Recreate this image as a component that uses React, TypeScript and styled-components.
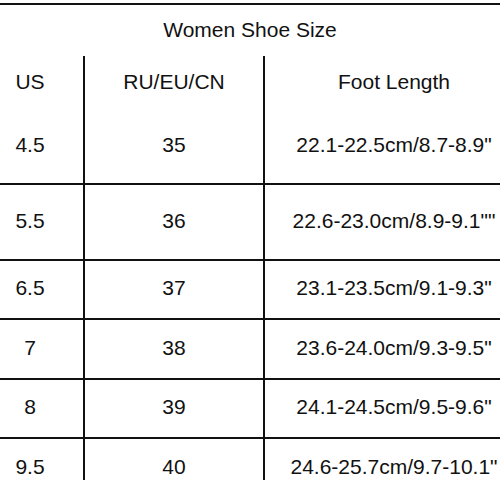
import styled, { createGlobalStyle } from 'styled-components';

const GlobalStyle = createGlobalStyle`
  html, body {
    margin: 0;
    padding: 0;
    background: #fff;
    overflow: hidden;
  }
  body {
    font-family: "Liberation Sans", Arial, sans-serif;
    color: #111;
  }
`;

// Chart wrapper: wider than the window, so first and last columns run off the edges
const Chart = styled.div`
  width: 546px;
  margin: 3px 0 0 -23px;
  border-top: 2px solid #111;
`;

const Title = styled.div`
  height: 51px;
  display: flex;
  align-items: center;
  justify-content: center;
  font-size: 21px;
  padding-bottom: 2px;
  box-sizing: border-box;
`;

const Table = styled.div`
  display: grid;
  grid-template-columns: 106px 180px 260px;
`;

const Cell = styled.div<{ $col: number; $height: number; $ruled: boolean }>`
  height: ${({ $height }) => $height}px;
  display: flex;
  align-items: center;
  justify-content: center;
  font-size: 21px;
  box-sizing: border-box;
  padding-bottom: 3px;
  border-left: ${({ $col }) => ($col > 0 ? '2px solid #111' : 'none')};
  border-top: ${({ $ruled }) => ($ruled ? '2px solid #111' : 'none')};
`;

const header = ['US', 'RU/EU/CN', 'Foot Length'];

const rows: { cells: string[]; height: number }[] = [
  { cells: ['4.5', '35', '22.1-22.5cm/8.7-8.9"'], height: 73 },
  { cells: ['5.5', '36', '22.6-23.0cm/8.9-9.1""'], height: 76 },
  { cells: ['6.5', '37', '23.1-23.5cm/9.1-9.3"'], height: 59 },
  { cells: ['7', '38', '23.6-24.0cm/9.3-9.5"'], height: 60 },
  { cells: ['8', '39', '24.1-24.5cm/9.5-9.6"'], height: 59 },
  { cells: ['9.5', '40', '24.6-25.7cm/9.7-10.1"'], height: 60 },
];

const App = () => {
  return (
    <>
      <GlobalStyle />
      <Chart>
        <Title>Women Shoe Size</Title>
        <Table>
          {header.map((h, i) => (
            <Cell key={h} $col={i} $height={54} $ruled={false}>
              {h}
            </Cell>
          ))}
          {rows.map((row, r) =>
            row.cells.map((c, i) => (
              <Cell key={`${r}-${i}`} $col={i} $height={row.height} $ruled={r > 0}>
                {c}
              </Cell>
            ))
          )}
        </Table>
      </Chart>
    </>
  );
};

export default App;
